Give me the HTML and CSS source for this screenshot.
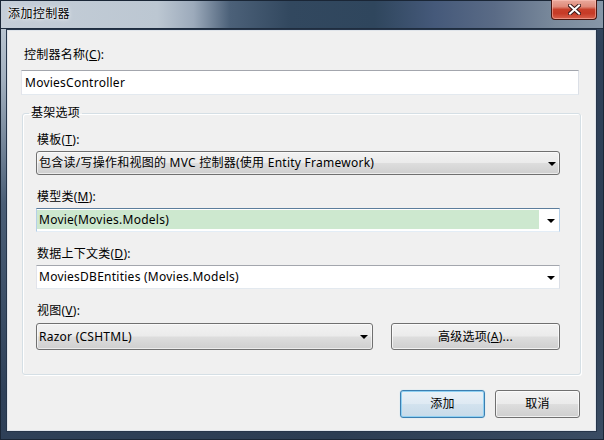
FILE: index.html
```html
<!DOCTYPE html>
<html lang="zh-CN">
<head>
<meta charset="utf-8">
<title>添加控制器</title>
<link rel="stylesheet" href="styles.css">
</head>
<body>
<div class="window">
  <div class="titlebar">
    <span class="title">添加控制器</span>
    <span class="close" aria-label="关闭">
      <svg width="13" height="11" viewBox="0 0 13 11">
        <path d="M2 1.5 L11 9.5 M11 1.5 L2 9.5" stroke="#3a1a1a" stroke-width="4" stroke-linecap="square"/>
        <path d="M2 1.5 L11 9.5 M11 1.5 L2 9.5" stroke="#ffffff" stroke-width="2" stroke-linecap="square"/>
      </svg>
    </span>
  </div>
  <div class="client">
    <div class="label label-first">控制器名称(<u>C</u>):</div>
    <div class="textbox">MoviesController</div>

    <fieldset class="group">
      <legend>基架选项</legend>

      <div class="label">模板(<u>T</u>):</div>
      <div class="combo combo-list">
        <span class="combo-text">包含读/写操作和视图的 MVC 控制器(使用 Entity Framework)</span>
        <span class="arrow"></span>
      </div>

      <div class="label">模型类(<u>M</u>):</div>
      <div class="combo combo-edit combo-focused">
        <span class="combo-text combo-selected">Movie(Movies.Models)</span>
        <span class="arrow"></span>
      </div>

      <div class="label">数据上下文类(<u>D</u>):</div>
      <div class="combo combo-edit">
        <span class="combo-text">MoviesDBEntities (Movies.Models)</span>
        <span class="arrow"></span>
      </div>

      <div class="label">视图(<u>V</u>):</div>
      <div class="row">
        <div class="combo combo-list combo-view">
          <span class="combo-text">Razor (CSHTML)</span>
          <span class="arrow"></span>
        </div>
        <button class="btn btn-adv">高级选项(<u>A</u>)...</button>
      </div>
    </fieldset>

    <div class="actions">
      <button class="btn btn-default">添加</button>
      <button class="btn">取消</button>
    </div>
  </div>
</div>
</body>
</html>
```

FILE: styles.css
```css
html, body {
  margin: 0;
  padding: 0;
}

body {
  font-family: "Noto Sans", "Noto Sans CJK SC", sans-serif;
  font-size: 12px;
  letter-spacing: 0.25px;
  color: #000;
  background: #2c3c52;
}

.window {
  width: 604px;
  height: 440px;
  box-sizing: border-box;
  border: 1px solid #1a2636;
  background: linear-gradient(150deg, #c6d0da 0%, #a3b1c0 10%, #4a5e76 26%, #2f4159 50%, #2c3d53 80%, #3a4c63 100%);
  display: flex;
  flex-direction: column;
}

.titlebar {
  height: 28px;
  flex: none;
  display: flex;
  align-items: flex-start;
  background: linear-gradient(90deg, #c5ced8 0%, #bcc7d2 26%, #9caabb 32%, #4c6179 38%, #32485f 48%, #2f465d 62%, #45597a 72%, #5a6b86 82%, #7a8a9c 92%, #8797a8 100%);
  box-shadow: inset 0 -1px 0 #1f2d3f;
}

.title {
  padding: 5px 0 0 7px;
  line-height: 16px;
  letter-spacing: 0.4px;
  color: #000;
  text-shadow: 0 0 5px rgba(255, 255, 255, 0.9), 0 0 2px rgba(255, 255, 255, 0.9);
}

.close {
  margin-left: auto;
  margin-right: 6px;
  margin-top: -1px;
  width: 46px;
  height: 20px;
  box-sizing: border-box;
  border: 1px solid #4a1610;
  border-top: none;
  border-radius: 0 0 4px 4px;
  background: linear-gradient(180deg, #e9a99c 0%, #df8a7a 35%, #c8402b 50%, #c63a26 70%, #d8614c 100%);
  box-shadow: inset 0 0 0 1px rgba(255, 200, 190, 0.5);
  display: flex;
  align-items: center;
  justify-content: center;
}

.client {
  margin: 1px 7px 8px 6px;
  flex: 1;
  box-sizing: border-box;
  border: 1px solid #dfe4ea;
  box-shadow: 0 0 0 1px #26354a;
  background: #f0f0f0;
  padding: 16px 15px 0 14px;
}

.label {
  line-height: 16px;
  margin: 0 0 3px 1px;
  white-space: nowrap;
}

.label-first {
  margin: 0 0 7px 2px;
}

u {
  text-decoration: underline;
  text-underline-offset: 1px;
}

.textbox {
  height: 25px;
  box-sizing: border-box;
  border: 1px solid #abadb3;
  border-top-color: #a3a6ad;
  border-left-color: #e2e3ea;
  border-right-color: #dbdfe6;
  border-bottom-color: #e3e9ef;
  background: #fff;
  padding: 0 3px;
  line-height: 23px;
  margin-left: -1px;
  width: 558px;
}

.group {
  margin: 10px 0 0 0;
  width: 559px;
  box-sizing: border-box;
  border: 1px solid #d5dfe5;
  border-radius: 3px;
  box-shadow: inset 1px 1px 0 #fff, 1px 1px 0 #fff;
  padding: 11px 20px 24px 13px;
}

.group legend {
  padding: 0 2px;
  margin-left: -7px;
  line-height: 16px;
}

.combo {
  position: relative;
  height: 24px;
  box-sizing: border-box;
  border: 1px solid #707070;
  border-radius: 3px;
  display: flex;
  align-items: center;
  margin-bottom: 14px;
}

.combo-list {
  background: linear-gradient(180deg, #f2f2f2 0%, #ebebeb 48%, #dddddd 52%, #cfcfcf 100%);
  box-shadow: inset 0 0 0 1px rgba(255, 255, 255, 0.6);
}

.combo-edit {
  border-radius: 0;
  border-color: #abadb3;
  border-top-color: #a3a6ad;
  border-left-color: #e2e3ea;
  border-right-color: #dbdfe6;
  border-bottom-color: #e3e9ef;
  background: #fff;
}

.combo-focused {
  border-color: #c5daed;
  border-top-color: #5c7d9c;
  border-left-color: #b5cfe7;
  border-right-color: #b5cfe7;
  border-bottom-color: #e3edf6;
}

.combo-text {
  padding-left: 2px;
  line-height: 20px;
  white-space: nowrap;
  flex: 1;
}

.combo-selected {
  align-self: stretch;
  margin: 1px 20px 2px 0;
  background: #cde8cf;
  display: flex;
  align-items: center;
}

.arrow {
  width: 0;
  height: 0;
  border-left: 4px solid transparent;
  border-right: 4px solid transparent;
  border-top: 4px solid #000;
  position: absolute;
  right: 0;
  top: 10px;
  margin-right: 3px;
}

.combo-edit .arrow {
  right: 1px;
}

.row {
  display: flex;
  gap: 18px;
  margin-top: 4px;
}

.combo-view {
  width: 337px;
  height: 27px;
  margin-bottom: 0;
}

.combo-view .arrow {
  top: 11px;
  right: 1px;
}

.btn {
  font-family: inherit;
  font-size: 12px;
  letter-spacing: 0.25px;
  color: #000;
  box-sizing: border-box;
  border: 1px solid #707070;
  border-radius: 3px;
  background: linear-gradient(180deg, #f2f2f2 0%, #ebebeb 48%, #dddddd 52%, #cfcfcf 100%);
  box-shadow: inset 0 0 0 1px rgba(255, 255, 255, 0.7);
  padding: 0;
  line-height: 16px;
}

.btn-adv {
  width: 169px;
  height: 27px;
}

.actions {
  display: flex;
  justify-content: flex-end;
  gap: 10px;
  margin-top: 15px;
}

.actions .btn {
  width: 85px;
  height: 28px;
}

.btn-default {
  border-color: #3c7fb1;
  background: linear-gradient(180deg, #e9f1f7 0%, #dfeaf3 48%, #d2e2ee 52%, #c8dbe9 100%);
  box-shadow: inset 0 0 0 1px #8fd0f2, 0 0 1px #8fd0f2;
}
```
